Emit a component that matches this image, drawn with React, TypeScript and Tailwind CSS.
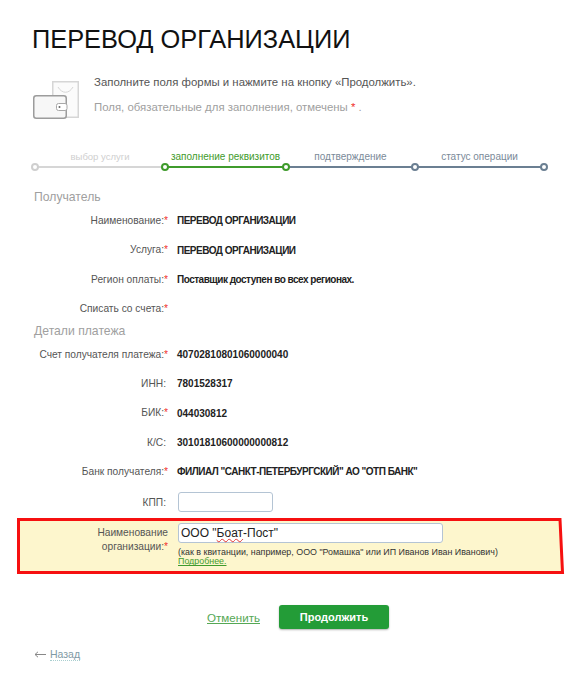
const labelCls = "w-[168px] shrink-0 text-right text-[10.2px] text-[#555]"

function Star() {
  return <span className="text-[#f0302a]">*</span>
}

function Row({ label, value, req, digits }: { label: string; value?: string; req?: boolean; digits?: boolean }) {
  return (
    <div className="flex h-[29.4px] items-center">
      <div className={req ? labelCls : `${labelCls} pr-[2px]`}>
        {label}:{req && <Star />}
      </div>
      {value && (
        <div className={digits ? "ml-[9px] text-[10px] font-bold text-[#222]" : "ml-[9px] text-[10px] tracking-[-0.5px] font-bold text-[#222]"}>
          {value}
        </div>
      )}
    </div>
  )
}

function Dot({ color, left }: { color: string; left: string }) {
  return <span className={`absolute top-[-3px] h-[8px] w-[8px] rounded-full border-2 bg-white ${color} ${left}`} />
}

function Wallet() {
  return (
    <svg width="48" height="41" viewBox="0 0 48 41" fill="none">
      <rect x="19.75" y="1.75" width="25.5" height="35.5" fill="#fbfbfb" stroke="#d6d6d6" strokeWidth="1.5" />
      <path d="M25 7 C29 14 36 14 40 7" stroke="#d6d6d6" strokeWidth="1" />
      <rect x="0.75" y="15.75" width="32.5" height="22.5" rx="2.5" fill="#f7f7f7" stroke="#9c9c9c" strokeWidth="1.5" />
      <rect x="23.5" y="23.5" width="10.5" height="7" rx="2" fill="#fff" stroke="#a8a8a8" />
      <circle cx="26.5" cy="27" r="1" fill="#666" />
    </svg>
  )
}

export default function App() {
  return (
    <main className="h-[700px] w-[579px] overflow-hidden bg-white font-['Liberation_Sans',Arial,sans-serif]">
      {/* TITLE */}
      <h1 className="pl-[32px] pt-[22px] text-[25.4px] leading-[34px] font-normal text-[#111]">ПЕРЕВОД ОРГАНИЗАЦИИ</h1>

      {/* INTRO */}
      <div className="mt-[18px] flex pl-[33px]">
        <div className="pt-[6px]">
          <Wallet />
        </div>
        <div className="ml-[13px] text-[11.4px] leading-[16px]">
          <p className="text-[#555]">Заполните поля формы и нажмите на кнопку «Продолжить».</p>
          <p className="mt-[9px] text-[#a0a0a0]">
            Поля, обязательные для заполнения, отмечены <Star /> .
          </p>
        </div>
      </div>

      {/* STEPS */}
      <div className="mt-[30px] pl-[35px]">
        <div className="flex w-[509px] text-center text-[10px] leading-[12px]">
          <div className="w-[130px] text-[9.5px] text-[#cfcfcf]">выбор услуги</div>
          <div className="w-[121px] text-[#3f9b2c]">заполнение реквизитов</div>
          <div className="w-[129px] text-[#7b8a99]">подтверждение</div>
          <div className="w-[129px] text-[#7b8a99]">статус операции</div>
        </div>
        <div className="relative mt-[3px] flex h-[2px] w-[509px]">
          <div className="w-[130px] bg-[#d6d6d6]" />
          <div className="w-[121px] bg-[#3f9b2c]" />
          <div className="w-[258px] bg-[#6b7f92]" />
          <Dot color="border-[#cfcfcf]" left="left-[-4px]" />
          <Dot color="border-[#3f9b2c]" left="left-[126px]" />
          <Dot color="border-[#3f9b2c]" left="left-[247px]" />
          <Dot color="border-[#6b7f92]" left="left-[376px]" />
          <Dot color="border-[#6b7f92]" left="left-[505px]" />
        </div>
      </div>

      {/* FORM */}
      <h2 className="mt-[20px] pl-[34px] text-[12.2px] leading-[18px] font-normal text-[#a0a0a0]">Получатель</h2>
      <div>
        <Row label="Наименование" value="ПЕРЕВОД ОРГАНИЗАЦИИ" req />
        <Row label="Услуга" value="ПЕРЕВОД ОРГАНИЗАЦИИ" req />
        <Row label="Регион оплаты" value="Поставщик доступен во всех регионах." req />
        <Row label="Списать со счета" req />
      </div>
      <h2 className="mt-[-2px] pl-[34px] text-[12.2px] leading-[18px] font-normal text-[#a0a0a0]">Детали платежа</h2>
      <div>
        <Row label="Счет получателя платежа" value="40702810801060000040" req digits />
        <Row label="ИНН" value="7801528317" digits />
        <Row label="БИК" value="044030812" req digits />
        <Row label="К/С" value="30101810600000000812" digits />
        <Row label="Банк получателя" value={'ФИЛИАЛ "САНКТ-ПЕТЕРБУРГСКИЙ" АО "ОТП БАНК"'} req />
        <div className="mt-[1px] flex h-[29.4px] items-center">
          <div className={`${labelCls} pr-[2px]`}>КПП:</div>
          <input className="ml-[10px] h-[20px] w-[95px] rounded-[3px] border border-[#b4c4d4] bg-white" />
        </div>
      </div>

      {/* HIGHLIGHT */}
      <div className="relative mt-[1.5px] ml-[17px] flex h-[56px] w-[548px]">
        <svg className="absolute inset-0" width="548" height="56" viewBox="0 0 548 56">
          <polygon points="1.5,1.5 543,1.5 545.5,54.5 1.5,54.5" fill="#fdf6cd" stroke="#f61010" strokeWidth="3" />
        </svg>
        <div className="relative w-[151px] shrink-0 pt-[8px] text-right text-[10.2px] leading-[14px] text-[#555]">
          Наименование
          <br />
          организации:
          <Star />
        </div>
        <div className="relative ml-[10px] pt-[5px]">
          <div className="flex h-[20px] w-[265px] items-center rounded-[3px] border border-[#b4c4d4] bg-white pl-[2px] text-[12px] text-[#222]">
            ООО "
            <span className="underline decoration-wavy decoration-[#e3342f] decoration-1">Боат</span>
            -Пост"
          </div>
          <div className="mt-[4px] text-[8.9px] leading-[10px] text-[#333]">
            (как в квитанции, например, ООО "Ромашка" или ИП Иванов Иван Иванович)
          </div>
          <a className="block text-[8.9px] leading-[9px] text-[#3f9b2c] underline">Подробнее.</a>
        </div>
      </div>

      {/* ACTIONS */}
      <div className="mt-[31px] flex items-center pl-[207px]">
        <a className="text-[11.6px] text-[#55a855] underline">Отменить</a>
        <button className="ml-[19px] h-[24px] w-[110px] rounded-[3px] bg-[#239c37] text-[11px] font-bold text-white shadow-[0_1px_2px_rgba(0,0,0,0.3)]">
          Продолжить
        </button>
      </div>
      <div className="mt-[19px] flex items-center pl-[34px] text-[10.5px] leading-[16px]">
        <svg width="12" height="7" viewBox="0 0 12 7" fill="none">
          <path d="M12 3.5H1M4 0.8L1 3.5L4 6.2" stroke="#888" />
        </svg>
        <a className="ml-[4px] border-b border-dotted border-[#a9cfd0] leading-[12px] text-[#7f9aa5]">Назад</a>
      </div>
    </main>
  )
}
